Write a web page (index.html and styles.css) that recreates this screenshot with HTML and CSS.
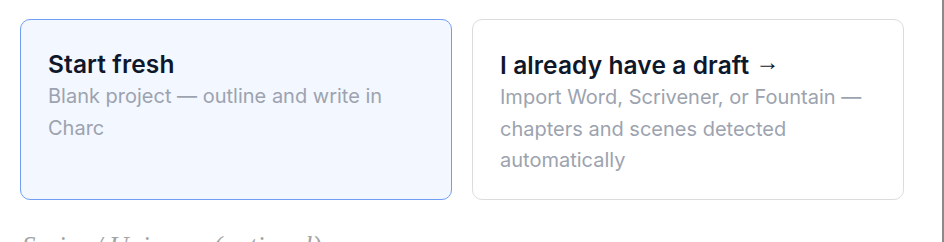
FILE: index.html
```html
<!DOCTYPE html>
<html lang="en">
<head>
<meta charset="UTF-8">
<title>New project</title>
<link rel="stylesheet" href="styles.css">
</head>
<body>
  <div class="page">
    <div class="choices">
      <div class="choice on">
        <h3 class="choiceTitle">Start fresh</h3>
        <p class="choiceDesc">Blank project — outline and write in Charc</p>
      </div>
      <div class="choice">
        <h3 class="choiceTitle">I already have a draft <span class="arrow">→</span></h3>
        <p class="choiceDesc">Import Word, Scrivener, or Fountain — chapters and scenes detected automatically</p>
      </div>
    </div>
    <label class="fieldLabel">Series / Universe (optional)</label>
  </div>
</body>
</html>
```

FILE: styles.css
```css
* { margin: 0; padding: 0; box-sizing: border-box; }
html, body { height: 100%; overflow: hidden; }
body {
  background: #fff;
  font-family: Inter, "Noto Sans", sans-serif;
  border-right: 2px solid #8a8a8a;
}
.page {
  width: 884px;
  margin-left: 20px;
  padding-top: 19px;
}
.choices {
  display: grid;
  grid-template-columns: 1fr 1fr;
  gap: 20px;
}
.choice {
  height: 181px;
  padding: 29px 27px 0;
  border: 1px solid #dcdcdf;
  border-radius: 10px;
  background: #fff;
}
.choice.on {
  border-color: #6f9ef2;
  background: #f3f7ff;
}
.choiceTitle {
  font-size: 24.5px;
  font-weight: 600;
  line-height: 30px;
  color: #0f172a;
  margin-bottom: 2px;
  letter-spacing: 0.1px;
}
.arrow {
  font-family: "Noto Sans", sans-serif;
  font-weight: 400;
  font-size: 24px;
  line-height: 1;
  vertical-align: 4px;
}
.choiceDesc {
  font-size: 20px;
  line-height: 31.5px;
  color: #9ca3af;
}
.fieldLabel {
  display: block;
  margin-top: 31px;
  padding-left: 2px;
  font-family: "Liberation Serif", serif;
  font-style: italic;
  font-size: 27px;
  color: #a3a3a3;
}
```
